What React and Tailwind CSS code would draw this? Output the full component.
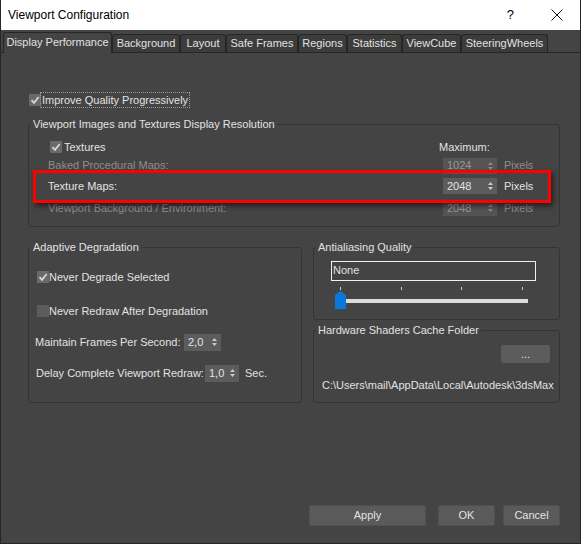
import React from 'react'

const tabs = [
  { label: 'Display Performance', w: 'w-[109px]', active: true },
  { label: 'Background', w: 'w-[68px]' },
  { label: 'Layout', w: 'w-[46px]' },
  { label: 'Safe Frames', w: 'w-[72px]' },
  { label: 'Regions', w: 'w-[49px]' },
  { label: 'Statistics', w: 'w-[55px]' },
  { label: 'ViewCube', w: 'w-[59px]' },
  { label: 'SteeringWheels', w: 'w-[87px]' },
]

function Check({ checked }) {
  return (
    <span className={`w-[12px] h-[12px] shrink-0 flex items-center justify-center ${checked ? 'bg-[#6a6a6a]' : 'bg-[#5c5c5c]'}`}>
      {checked && (
        <svg width="10" height="10" viewBox="0 0 10 10">
          <path d="M1.5 5.2 L4 7.8 L8.7 2" fill="none" stroke="#d6d6d6" strokeWidth="1.8" />
        </svg>
      )}
    </span>
  )
}

function Spinner({ value, w, disabled }) {
  return (
    <div className={`${w} h-[16px] flex items-center justify-between pl-[4px] pr-[4px] ${disabled ? 'bg-[#545454] text-[#999]' : 'bg-[#5c5c5c] text-[#e2e2e2]'}`}>
      <span>{value}</span>
      <svg width="5" height="10" viewBox="0 0 5 10">
        <path d="M0 4 L2.5 1 L5 4 Z M0 6 L2.5 9 L5 6 Z" fill={disabled ? '#8a8a8a' : '#c8c8c8'} />
      </svg>
    </div>
  )
}

function Group({ title, className, children }) {
  return (
    <fieldset className={`border border-[#343434] rounded-[3px] ${className}`}>
      <legend className="ml-[2px] px-[2px] leading-[14px] text-[#e2e2e2]">{title}</legend>
      {children}
    </fieldset>
  )
}

function ResRow({ label, value, disabled, h }) {
  return (
    <div className={`${h} flex items-center`}>
      <span className={`w-[395px] ${disabled ? 'text-[#8e8e8e]' : 'text-[#e2e2e2]'}`}>{label}</span>
      <Spinner value={value} w="w-[54px]" disabled={disabled} />
      <span className={`ml-[7px] ${disabled ? 'text-[#8e8e8e]' : 'text-[#e2e2e2]'}`}>Pixels</span>
    </div>
  )
}

export default function App() {
  return (
    <div className="w-[581px] h-[544px] bg-[#444444] relative overflow-hidden flex flex-col border-l border-r border-b border-[#262626] text-[11px] text-[#e2e2e2]" style={{ fontFamily: '"Liberation Sans", Arial, sans-serif' }}>
      <div className="h-[30px] bg-white flex items-center justify-between pl-[7px] text-black text-[12px] shrink-0">
        <span>Viewport Configuration</span>
        <div className="flex items-center">
          <span className="text-[13px] mr-[37px]">?</span>
          <svg width="12" height="12" viewBox="0 0 12 12" className="mr-[17px]">
            <path d="M0.5 0.5 L11.5 11.5 M11.5 0.5 L0.5 11.5" stroke="#111" strokeWidth="1" />
          </svg>
        </div>
      </div>

      <div className="h-[23px] flex items-end pl-[2px] border-b border-[#262626] shrink-0">
        {tabs.map(t => (
          <div
            key={t.label}
            className={`${t.w} flex items-center justify-center rounded-t-[3px] border border-[#262626] ${t.active ? 'h-[21px] bg-[#444444] border-b-0 -mb-[1px] pb-[1px]' : 'h-[18px] bg-[#3c3c3c] border-b-0'}`}
          >
            {t.label}
          </div>
        ))}
      </div>

      <div className="flex-1 flex flex-col pl-[27px] pr-[20px]">
        <div className="mt-[39px] h-[16px] flex items-center">
          <span className="ml-[1px]"><Check checked /></span>
          <span className="ml-[-1px] border border-dotted border-[#9a9a9a] px-[1px] leading-[14px]">Improve Quality Progressively</span>
        </div>

        <Group title="Viewport Images and Textures Display Resolution" className="mt-[9px] w-[532px]">
          <div className="pl-[19px] pt-[7px] pb-[7px]">
            <div className="h-[18px] flex items-center">
              <span className="w-[389px] flex items-center ml-[2px]">
                <Check checked />
                <span className="ml-[2px]">Textures</span>
              </span>
              <span>Maximum:</span>
            </div>
            <ResRow label="Baked Procedural Maps:" value="1024" disabled h="h-[19px]" />
            <ResRow label="Texture Maps:" value="2048" h="h-[22px]" />
            <ResRow label="Viewport Background / Environment:" value="2048" disabled h="h-[22px]" />
          </div>
        </Group>

        <div className="mt-[13px] flex gap-[11px]">
          <Group title="Adaptive Degradation" className="w-[274px] h-[163px]">
            <div className="pl-[8px] pt-[15px]">
              <div className="h-[16px] flex items-center">
                <Check checked />
                <span>Never Degrade Selected</span>
              </div>
              <div className="h-[16px] mt-[18px] flex items-center">
                <Check />
                <span>Never Redraw After Degradation</span>
              </div>
              <div className="h-[18px] mt-[14px] flex items-center -ml-[2px]">
                <span className="w-[149px]">Maintain Frames Per Second:</span>
                <Spinner value="2,0" w="w-[37px] h-[17px]" />
              </div>
              <div className="h-[18px] mt-[13px] flex items-center -ml-[1px]">
                <span className="w-[169px]">Delay Complete Viewport Redraw:</span>
                <Spinner value="1,0" w="w-[34px] h-[17px]" />
                <span className="ml-[6px]">Sec.</span>
              </div>
            </div>
          </Group>

          <div className="flex flex-col w-[247px]">
            <Group title="Antialiasing Quality" className="h-[80px]">
              <div className="pl-[17px] pt-[7px]">
                <div className="w-[205px] h-[20px] border border-[#f0f0f0] flex items-start pt-[3px] pl-[1px] leading-none">None</div>
                <svg width="205" height="23" viewBox="0 0 205 23" className="mt-[6px] block">
                  <rect x="9" y="0" width="1" height="3" fill="#cfcfcf" />
                  <rect x="70" y="0" width="1" height="3" fill="#cfcfcf" />
                  <rect x="130" y="0" width="1" height="3" fill="#cfcfcf" />
                  <rect x="191" y="0" width="1" height="3" fill="#cfcfcf" />
                  <rect x="13" y="12" width="184" height="4" fill="#dcdcdc" />
                  <path d="M4 8 L9.5 4 L15 8 L15 22 L4 22 Z" fill="#0a78d8" />
                </svg>
              </div>
            </Group>
            <Group title="Hardware Shaders Cache Folder" className="mt-[3px] h-[80px]">
              <div className="pt-[8px]">
                <div className="flex justify-end pr-[9px]">
                  <div className="w-[49px] h-[18px] bg-[#5c5c5c] rounded-[2px] flex items-center justify-center">...</div>
                </div>
                <div className="mt-[15px] h-[14px] pl-[8px] flex items-center whitespace-nowrap">C:\Users\mail\AppData\Local\Autodesk\3dsMax</div>
              </div>
            </Group>
          </div>
        </div>

        <div className="mt-auto mb-[17px] flex justify-end">
          <div className="w-[117px] h-[21px] bg-[#5a5a5a] border border-[#505050] rounded-[2px] flex items-center justify-center">Apply</div>
          <div className="ml-[12px] w-[57px] h-[21px] bg-[#5a5a5a] border border-[#505050] rounded-[2px] flex items-center justify-center">OK</div>
          <div className="ml-[8px] w-[57px] h-[21px] bg-[#5a5a5a] border border-[#505050] rounded-[2px] flex items-center justify-center">Cancel</div>
        </div>
      </div>

      <div className="absolute left-[32px] top-[170px] w-[518px] h-[33px] border-[3px] border-[#ff0000] shadow-[2px_3px_5px_rgba(0,0,0,0.55)]"></div>
    </div>
  )
}
